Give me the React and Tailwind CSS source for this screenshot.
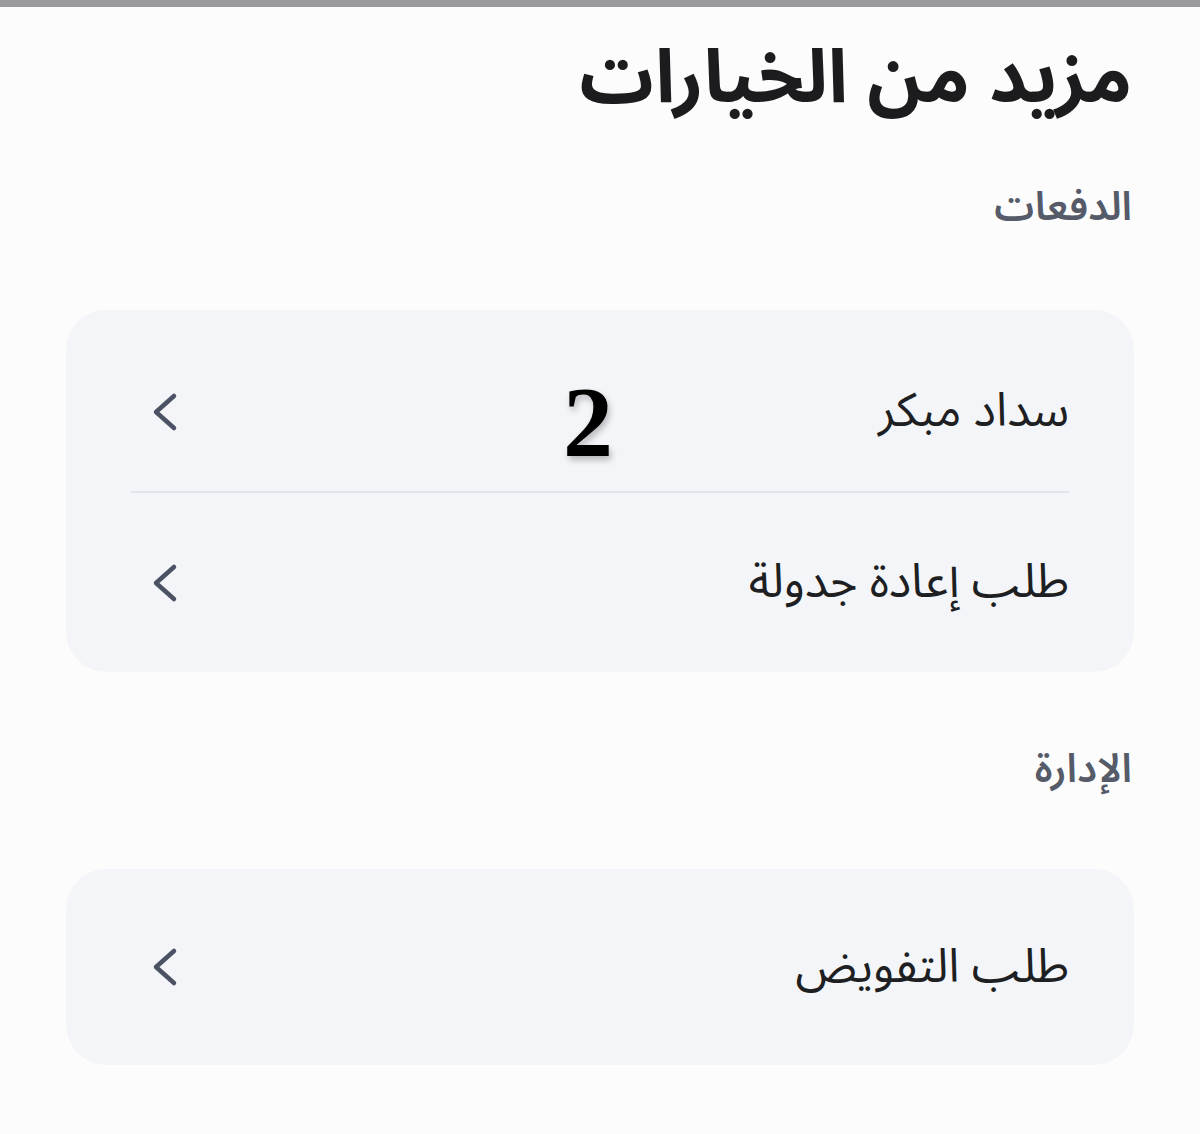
import React from "react";

const Chevron = () => (
  <svg width="28" height="40" viewBox="0 0 28 40" fill="none" className="shrink-0 ml-[20px]">
    <path d="M23 4 L5 20 L23 36" stroke="#4b5263" strokeWidth="4.5" strokeLinecap="round" strokeLinejoin="round" />
  </svg>
);

const Row = ({ label, h }) => (
  <div className={`flex items-center justify-between ${h}`}>
    <span className="text-[47px] text-[#1e1f22] leading-none">{label}</span>
    <Chevron />
  </div>
);

export default function App() {
  return (
    <div
      dir="rtl"
      className="w-[1200px] h-[1134px] bg-[#fcfcfc] overflow-hidden"
      style={{ fontFamily: '"Noto Sans Arabic", "Noto Sans", "DejaVu Sans", sans-serif' }}
    >
      <div className="h-[7px] bg-[#9b9b9d]" />
      <div className="px-[66px]">
        <h1 className="pr-[2px] pt-[27px] text-[74px] font-bold text-[#1c1c1e] leading-[90px]">مزيد من الخيارات</h1>
        <div className="pr-[2px] mt-[60px] text-[40px] font-semibold text-[#555b69] leading-[48px]">الدفعات</div>
        <div className="mt-[78px] rounded-[40px] bg-[#f4f5f9]">
          <div className="px-[65px]">
            <div className="relative">
              <Row label="سداد مبكر" h="h-[181px] pt-[22px]" />
              <span
                className="absolute left-[432px] top-[62px] text-[100px] font-bold text-black leading-none"
                style={{ fontFamily: '"Liberation Serif", serif', textShadow: "2px 4px 6px rgba(0,0,0,0.25)" }}
              >
                2
              </span>
            </div>
            <div className="h-[2px] bg-[#e3e5ea]" />
            <Row label="طلب إعادة جدولة" h="h-[179px]" />
          </div>
        </div>
        <div className="pr-[2px] mt-[74px] text-[40px] font-semibold text-[#555b69] leading-[48px]">الإدارة</div>
        <div className="mt-[75px] rounded-[40px] bg-[#f4f5f9] px-[65px]">
          <Row label="طلب التفويض" h="h-[196px]" />
        </div>
      </div>
    </div>
  );
}
